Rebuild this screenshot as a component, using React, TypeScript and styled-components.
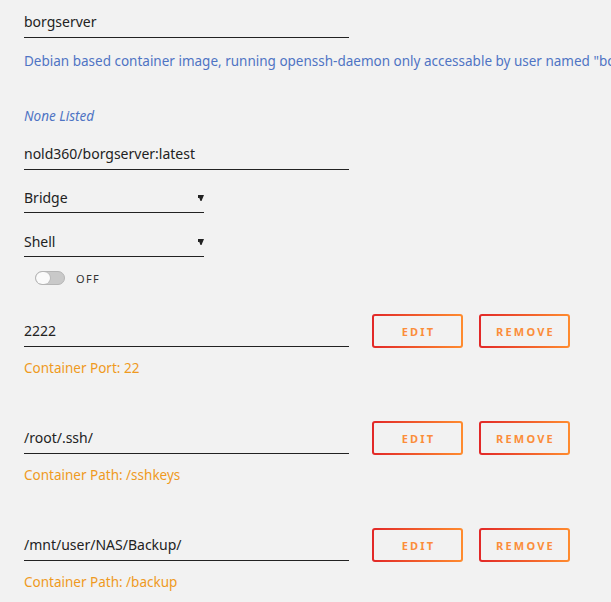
import styled, { createGlobalStyle } from 'styled-components';

const GlobalStyle = createGlobalStyle`
	html, body {
		margin: 0;
		background: #f2f2f2;
	}
	body {
		font-family: 'Noto Sans', 'Open Sans', sans-serif;
		color: #222;
		overflow: hidden;
	}
`;

const Page = styled.div`
	display: flex;
	flex-direction: column;
	padding: 6px 0 0 24px;
	width: 587px;
	white-space: nowrap;
`;

const Field = styled.div<{ $width?: number; $top?: number }>`
	display: flex;
	align-items: center;
	justify-content: space-between;
	box-sizing: border-box;
	width: ${p => p.$width ?? 325}px;
	height: 32px;
	margin-top: ${p => p.$top ?? 0}px;
	border-bottom: 1px solid #222;
	font-size: 14px;
	color: #222;
`;

const Line = styled.div<{ $top: number; $color: string; $italic?: boolean }>`
	height: 20px;
	line-height: 20px;
	margin-top: ${p => p.$top}px;
	font-size: 13.5px;
	color: ${p => p.$color};
	font-style: ${p => (p.$italic ? 'italic' : 'normal')};
	overflow: hidden;
`;

const SelectText = styled.span`
	padding-top: 2px;
`;

const Caret = styled.svg`
	width: 6px;
	height: 6px;
	margin-top: 3px;
`;

const ToggleRow = styled.div`
	display: flex;
	align-items: center;
	gap: 11px;
	height: 20px;
	margin-top: 11px;
	padding-left: 11px;
`;

const Toggle = styled.div`
	display: flex;
	box-sizing: border-box;
	width: 30px;
	height: 14px;
	border: 1px solid #b5b5b5;
	border-radius: 7px;
	background: #c9c9c9;
	overflow: hidden;
`;

const Knob = styled.div`
	width: 14px;
	height: 100%;
	border-radius: 6px;
	background: #fafafa;
	box-shadow: 1px 0 0 #bbb;
`;

const ToggleLabel = styled.span`
	font-size: 11px;
	letter-spacing: 1.3px;
	color: #333;
`;

const EntryRow = styled.div<{ $top: number }>`
	display: flex;
	align-items: flex-end;
	margin-top: ${p => p.$top}px;
`;

const Buttons = styled.div`
	display: flex;
	gap: 16px;
	margin-left: 23px;
	margin-bottom: -1px;
`;

const Button = styled.button`
	box-sizing: border-box;
	width: 91px;
	height: 34px;
	border: 2px solid transparent;
	border-radius: 3px;
	background: linear-gradient(#f2f2f2, #f2f2f2) padding-box,
		linear-gradient(90deg, #e22828, #ff8c2f) border-box;
	font-family: 'Noto Sans', sans-serif;
	font-size: 11px;
	font-weight: 700;
	letter-spacing: 2.2px;
	color: #fb8d3a;
	text-transform: uppercase;
	padding: 0 0 0 2px;
	cursor: pointer;
`;

const entries = [
	{ host: '2222', label: 'Container Port: 22', top: 26 },
	{ host: '/root/.ssh/', label: 'Container Path: /sshkeys', top: 43 },
	{ host: '/mnt/user/NAS/Backup/', label: 'Container Path: /backup', top: 43 },
];

const blue = '#4f74c4';
const orange = '#ef9a1e';

const Select = ({ value, top }: { value: string; top: number }) => (
	<Field $width={180} $top={top}>
		<SelectText>{value}</SelectText>
		<Caret viewBox="0 0 6 6">
			<polygon points="0,0 6,0 3.5,6 2.5,6" fill="#222" />
			<rect x="0" y="0" width="1.2" height="3" fill="#222" />
		</Caret>
	</Field>
);

export default function App() {
	return (
		<>
			<GlobalStyle />
			<Page>
				<Field>borgserver</Field>
				<Line $top={13} $color={blue}>
					Debian based container image, running openssh-daemon only accessable by user named "borg"
				</Line>
				<Line $top={35} $color={blue} $italic>
					None Listed
				</Line>
				<Field $top={12}>nold360/borgserver:latest</Field>
				<Select value="Bridge" top={11} />
				<Select value="Shell" top={12} />
				<ToggleRow>
					<Toggle>
						<Knob />
					</Toggle>
					<ToggleLabel>OFF</ToggleLabel>
				</ToggleRow>
				{entries.map(e => (
					<div key={e.host}>
						<EntryRow $top={e.top}>
							<Field>{e.host}</Field>
							<Buttons>
								<Button>Edit</Button>
								<Button>Remove</Button>
							</Buttons>
						</EntryRow>
						<Line $top={11} $color={orange}>
							{e.label}
						</Line>
					</div>
				))}
			</Page>
		</>
	);
}
